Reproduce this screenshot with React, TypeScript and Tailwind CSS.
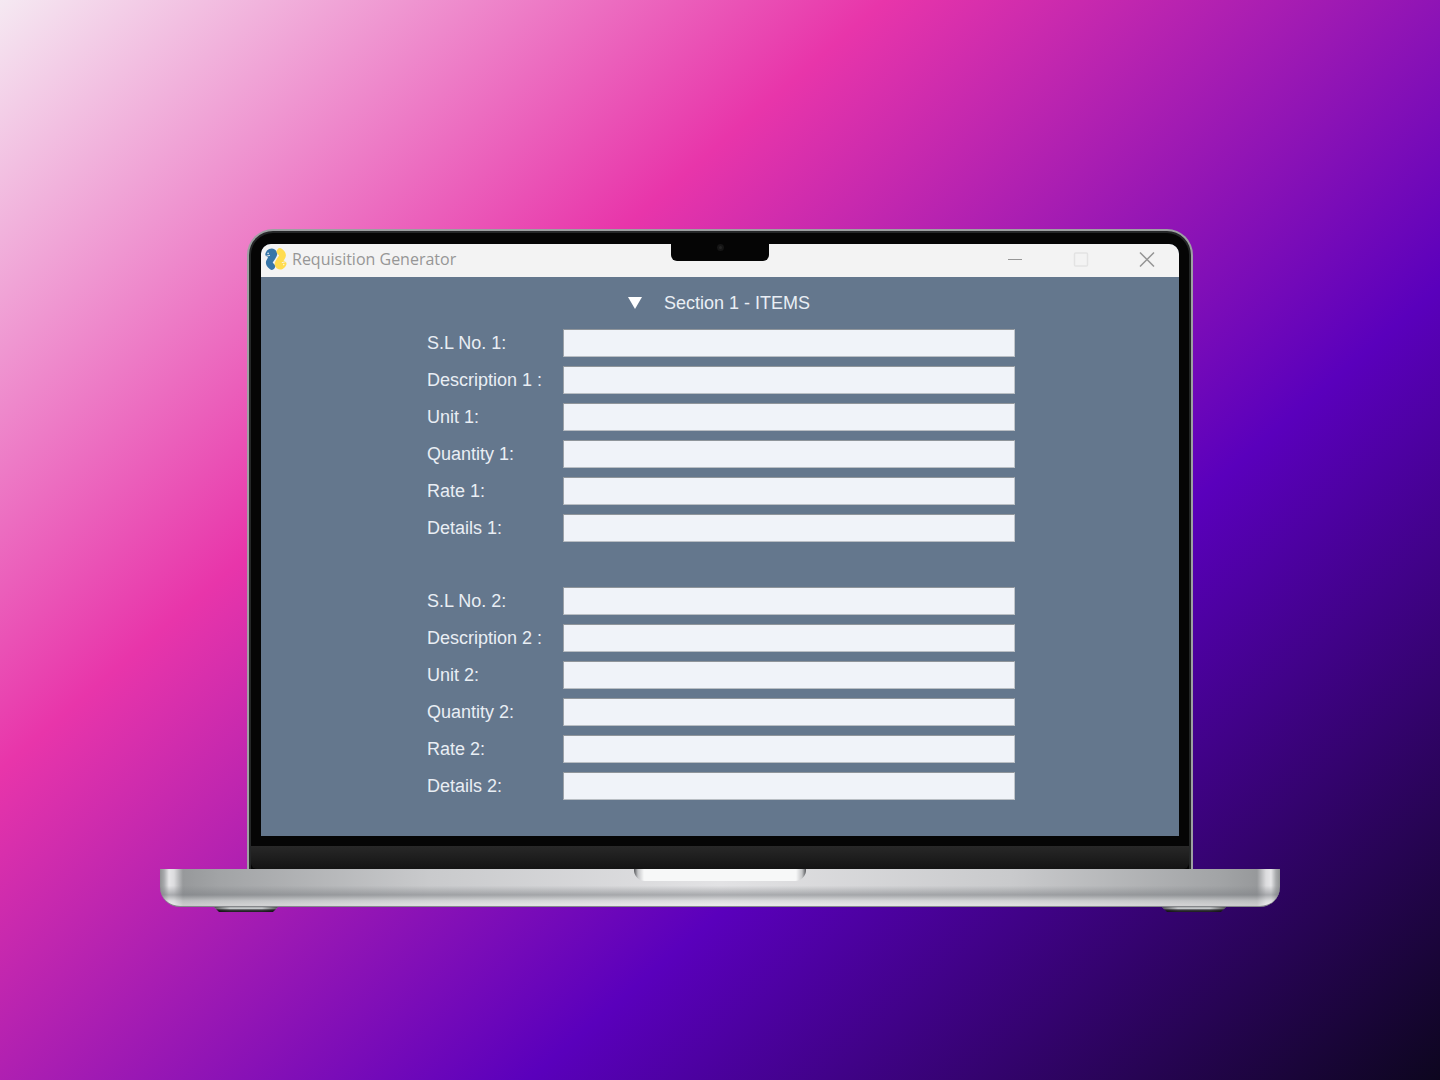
import React from "react";

const fieldNames = ["S.L No. #:", "Description # :", "Unit #:", "Quantity #:", "Rate #:", "Details #:"];

function SnakeLogo() {
  return (
    <svg className="size-6 shrink-0" viewBox="-1 -1 24 24" fill="none" strokeWidth="6.6" strokeLinecap="round" strokeLinejoin="round" aria-hidden="true">
      <path d="M3.7 6.2C4.4 4.2 6.4 3.2 8 4.2C9.6 5.4 8.8 7.2 7.4 9.2L5 12.6C3.6 14.6 4.8 16.8 6.8 18.4" stroke="#3776a8" />
      <path d="M18.1 15.8C17.4 17.8 15.4 18.8 13.8 17.8C12.2 16.6 13 14.8 14.4 12.8L16.8 9.4C18.2 7.4 17 5.2 15 3.6" stroke="#ffdc4f" />
      <path d="M.8 8.4L4.6 7.4M17.2 14.6L21 13.6" stroke="#f3f3f3" strokeWidth=".9" />
      <circle cx="3.1" cy="5.4" r=".8" fill="#e6edf2" />
      <circle cx="18.7" cy="16.6" r=".8" fill="#fff6cf" />
    </svg>
  );
}

function TitleBar() {
  return (
    <header className="flex h-[33px] items-center justify-between bg-[#f3f3f3] pb-1 pl-[3px] pr-6 text-[#969696]">
      <div className="flex items-center gap-1">
        <SnakeLogo />
        <h1 className="whitespace-nowrap font-['Open_Sans',sans-serif] text-[16px] leading-6">Requisition Generator</h1>
      </div>
      <div className="flex items-center gap-[50px]">
        <button type="button" aria-label="Minimize">
          <svg className="block size-4" viewBox="0 0 16 16" fill="none" stroke="currentColor"><path d="M1 8.5H15" /></svg>
        </button>
        <button type="button" aria-label="Maximize" disabled className="text-[#e3e3e3]">
          <svg className="block size-4" viewBox="0 0 16 16" fill="none" stroke="currentColor" strokeWidth="1.5"><rect x="1.5" y="2" width="13" height="13" rx="1" /></svg>
        </button>
        <button type="button" aria-label="Close">
          <svg className="block size-4" viewBox="0 0 16 16" fill="none" stroke="currentColor" strokeWidth="1.5"><path d="M1 1.5L15 15.5M15 1.5L1 15.5" /></svg>
        </button>
      </div>
    </header>
  );
}

function ItemFields({ n }: { n: number }) {
  return (
    <fieldset className="flex flex-col gap-[9px]" aria-label={`Item ${n}`}>
      {fieldNames.map((name) => {
        const label = name.replace("#", String(n));
        return (
          <label key={name} className="flex h-7 items-center">
            <span className="w-[136px] shrink-0 whitespace-nowrap">{label}</span>
            <input
              type="text"
              className="h-7 min-w-0 flex-1 border border-b-[#b9bec4] border-l-[#9ba1a8] border-r-[#c0c5ca] border-t-[#8f959b] bg-[#f0f3f9] px-1 text-base text-[#64778d] outline-none"
            />
          </label>
        );
      })}
    </fieldset>
  );
}

function Notch() {
  return (
    <div className="absolute left-1/2 top-0 flex h-[17px] w-[98px] -translate-x-1/2 justify-center rounded-b-md bg-[#050505]">
      <span className="size-[7px] rounded-full border-2 border-[#151515] bg-[#242424]" />
    </div>
  );
}

function Foot() {
  return (
    <div className="h-[5px] w-16 bg-[linear-gradient(to_right,#00000090,transparent_16px,transparent_48px,#00000090),linear-gradient(to_bottom,#a9abac_0%,#c4c8ca_30%,#3c3d40_60%,#1a1a1c_100%)] [clip-path:polygon(0_0,100%_0,92%_100%,8%_100%)]" />
  );
}

export default function App() {
  return (
    <main className="flex min-h-screen flex-col items-center justify-center bg-[linear-gradient(139deg,#f5e9f2_0%,#e835aa_33%,#5a00bc_66%,#0d061f_100%)] px-4 pt-[61px]">
      <div className="w-full max-w-[1120px]">
        <div className="mx-auto w-[calc(100%-174px)] rounded-t-[26px] bg-[#9da0a2] px-0.5 pt-0.5">
          <div className="rounded-t-[24px] bg-[#252728] px-0.5 pt-0.5">
            <div className="rounded-t-[22px] bg-[#050505] pt-[11px]">
              <div className="px-[10px]">
                <div className="relative overflow-hidden rounded-t-[10px] bg-[#64778d]">
                  <TitleBar />
                  <Notch />
                  <form className="mx-auto w-full max-w-[590px] pb-9 pl-0.5 pt-3 font-['Liberation_Sans',sans-serif] text-[18px] leading-7 text-[#e9eef4]">
                    <button type="button" aria-expanded="true" className="mx-auto mb-3 flex items-center gap-[22px] pr-1">
                      <svg className="h-3 w-[14px]" viewBox="0 0 14 12" fill="#fff" aria-hidden="true"><path d="M0 0H14L7 12Z" /></svg>
                      <span>Section 1 - ITEMS</span>
                    </button>
                    <div className="flex flex-col gap-[45px]">
                      <ItemFields n={1} />
                      <ItemFields n={2} />
                    </div>
                  </form>
                </div>
              </div>
              <div className="mt-[10px] h-[23px] rounded-b-md bg-linear-to-b from-[#282828] to-[#141414]" />
            </div>
          </div>
        </div>
        <div className="flex h-[38px] justify-center rounded-b-[20px] border-b border-[#85888b] bg-[linear-gradient(to_bottom,transparent_0%,transparent_45%,#7e818590_70%,#d8dadb90_86%,#eeeeee90_96%),linear-gradient(to_right,#8f9192_0px,#a8aaac_4px,#e6e6e8_9px,#dcdcde_14px,#97999b_23px,#a2a4a6_60px,#c9cacc_24%,#e2e2e4_50%,#c9cacc_76%,#a2a4a6_calc(100%-60px),#97999b_calc(100%-23px),#dcdcde_calc(100%-14px),#e6e6e8_calc(100%-9px),#a8aaac_calc(100%-4px),#8f9192_100%)]">
          <div className="h-3 w-[172px] rounded-b-[11px] bg-[linear-gradient(to_right,#55575a,#c5c6c8_4px,#f7f8f8_10px,#f7f8f8_calc(100%-10px),#c5c6c8_calc(100%-4px),#55575a)]" />
        </div>
        <div className="flex justify-between px-[54px]">
          <Foot />
          <Foot />
        </div>
      </div>
    </main>
  );
}
